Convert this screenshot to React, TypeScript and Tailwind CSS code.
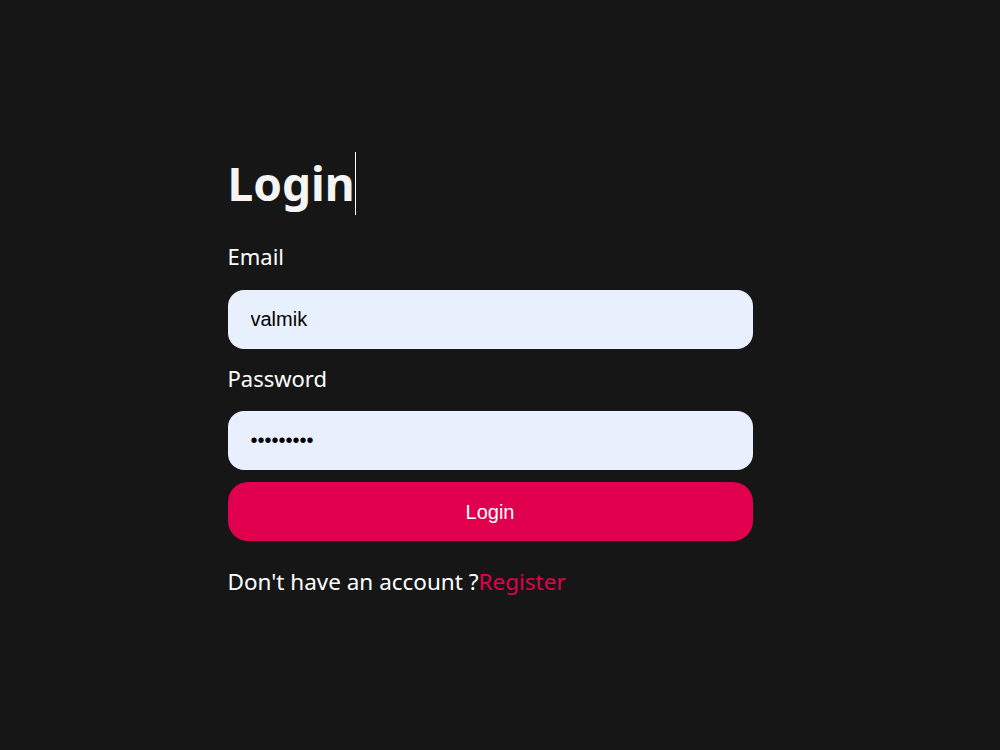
import React from "react";

export default function App() {
  return (
    <div className="min-h-[750px] w-full bg-[#161616] flex justify-center">
      <div className="w-[545px] pr-[20px] mt-[152px] flex flex-col font-['Noto_Sans','Open_Sans',sans-serif] text-white">
        <div className="flex">
          <h1 className="text-[46px] font-bold leading-[63px] text-[#f5f5f5] border-r border-white">Login</h1>
        </div>
        <label className="mt-[26px] text-[22px] leading-[30px]">Email</label>
        <input
          className="mt-[19px] h-[59px] rounded-[16px] bg-[#e8f0fe] px-[23px] text-[20px] text-black outline-none font-['Liberation_Sans',Arial,sans-serif]"
          defaultValue="valmik"
        />
        <label className="mt-[14px] text-[22px] leading-[30px]">Password</label>
        <input
          type="password"
          className="mt-[18px] h-[59px] rounded-[16px] bg-[#e8f0fe] px-[23px] text-[20px] text-black outline-none font-['Liberation_Sans',Arial,sans-serif]"
          defaultValue="valmik123"
        />
        <button className="mt-[12px] h-[59px] rounded-[20px] bg-[#e0004d] text-white text-[20px] font-['Liberation_Sans',Arial,sans-serif]">
          Login
        </button>
        <p className="mt-[26px] text-[22.5px] leading-[30px]">
          Don't have an account ?<span className="text-[#e0004d]">Register</span>
        </p>
      </div>
    </div>
  );
}
